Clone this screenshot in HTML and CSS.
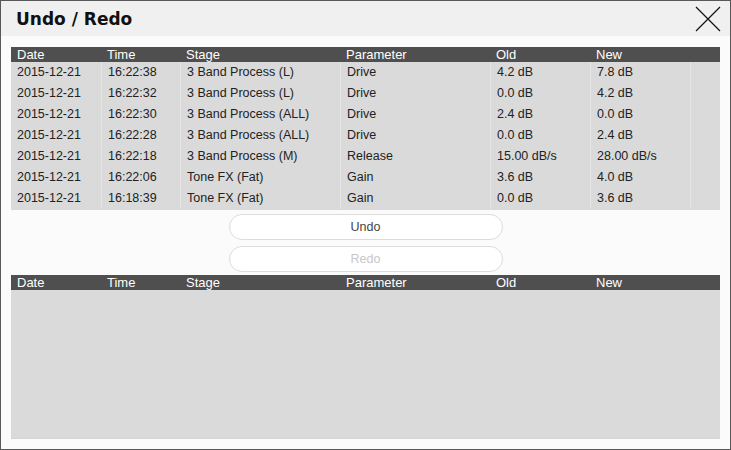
FILE: index.html
```html
<!DOCTYPE html>
<html>
<head>
<meta charset="utf-8">
<link rel="stylesheet" href="styles.css">
</head>
<body>
<div class="window">
  <div class="titlebar">
    <div class="title">Undo / Redo</div>
    <svg class="close" width="26" height="26" viewBox="0 0 26 26"><path d="M1 1 L25 25 M25 1 L1 25" stroke="#111" stroke-width="1.2" fill="none"/></svg>
  </div>
  <div class="content">
    <div class="table t1">
      <div class="row head"><div>Date</div><div>Time</div><div>Stage</div><div>Parameter</div><div>Old</div><div>New</div><div></div></div>
      <div class="body">
        <div class="row"><div>2015-12-21</div><div>16:22:38</div><div>3 Band Process (L)</div><div>Drive</div><div>4.2 dB</div><div>7.8 dB</div><div></div></div>
        <div class="row"><div>2015-12-21</div><div>16:22:32</div><div>3 Band Process (L)</div><div>Drive</div><div>0.0 dB</div><div>4.2 dB</div><div></div></div>
        <div class="row"><div>2015-12-21</div><div>16:22:30</div><div>3 Band Process (ALL)</div><div>Drive</div><div>2.4 dB</div><div>0.0 dB</div><div></div></div>
        <div class="row"><div>2015-12-21</div><div>16:22:28</div><div>3 Band Process (ALL)</div><div>Drive</div><div>0.0 dB</div><div>2.4 dB</div><div></div></div>
        <div class="row"><div>2015-12-21</div><div>16:22:18</div><div>3 Band Process (M)</div><div>Release</div><div>15.00 dB/s</div><div>28.00 dB/s</div><div></div></div>
        <div class="row"><div>2015-12-21</div><div>16:22:06</div><div>Tone FX (Fat)</div><div>Gain</div><div>3.6 dB</div><div>4.0 dB</div><div></div></div>
        <div class="row"><div>2015-12-21</div><div>16:18:39</div><div>Tone FX (Fat)</div><div>Gain</div><div>0.0 dB</div><div>3.6 dB</div><div></div></div>
      </div>
    </div>
    <div class="buttons">
      <div class="btn">Undo</div>
      <div class="btn disabled">Redo</div>
    </div>
    <div class="table t2">
      <div class="row head"><div>Date</div><div>Time</div><div>Stage</div><div>Parameter</div><div>Old</div><div>New</div><div></div></div>
      <div class="body empty"></div>
    </div>
  </div>
</div>
</body>
</html>
```

FILE: styles.css
```css
html, body {
  margin: 0;
  padding: 0;
  background: #fbfbfb;
}
.window {
  width: 731px;
  height: 450px;
  box-sizing: border-box;
  border: 1px solid #585858;
  background: #fbfbfb;
  display: flex;
  flex-direction: column;
}
.titlebar {
  height: 35px;
  background: #f0f0f0;
  display: flex;
  align-items: center;
  justify-content: space-between;
  padding: 0 9px 0 15px;
}
.title {
  font-family: "DejaVu Sans", Verdana, sans-serif;
  font-weight: bold;
  font-size: 17px;
  color: #111;
  margin-top: 1px;
}
.close {
  display: block;
  margin-top: 1px;
}
.content {
  flex: 1;
  display: flex;
  flex-direction: column;
  padding: 11px 10px 10px 10px;
}
.table {
  font-family: "Liberation Sans", Arial, sans-serif;
  font-size: 12.5px;
}
.row {
  display: grid;
  grid-template-columns: 90px 79px 160px 150px 100px 100px 30px;
}
.row > div {
  padding-left: 6px;
  white-space: nowrap;
}
.head {
  background: #4f4f4f;
  color: #fff;
  height: 15px;
  line-height: 15px;
  font-size: 13px;
}
.body {
  background: #dadada;
  color: #222;
  padding-bottom: 1px;
}
.body .row {
  height: 21px;
  line-height: 21px;
}
.body .row > div + div {
  border-left: 1px solid #e5e5e5;
}
.buttons {
  display: flex;
  flex-direction: column;
  align-items: center;
  gap: 6px;
  padding: 4px 0 3px 0;
}
.btn {
  width: 272px;
  height: 24px;
  border: 1px solid #dcdcdc;
  border-radius: 13px;
  background: #fff;
  font-family: "Liberation Sans", Arial, sans-serif;
  font-size: 12.5px;
  color: #444;
  display: flex;
  align-items: center;
  justify-content: center;
}
.btn.disabled {
  color: #c8c8c8;
}
.t2 {
  flex: 1;
  display: flex;
  flex-direction: column;
}
.body.empty {
  flex: 1;
  padding: 0;
  border-bottom: 1px solid #d4d4d4;
}
```
